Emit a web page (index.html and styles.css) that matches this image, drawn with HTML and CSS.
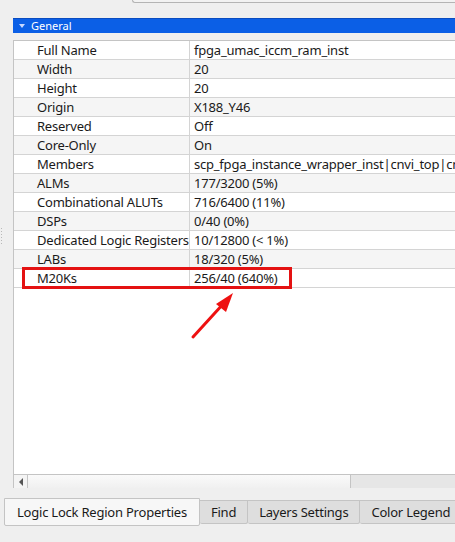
FILE: index.html
```html
<!DOCTYPE html>
<html>
<head>
<meta charset="utf-8">
<link rel="stylesheet" href="styles.css">
</head>
<body>
<div class="page">
  <div class="topstrip"><div class="topwidget"></div></div>
  <div class="grip"><i></i><i></i><i></i><i></i><i></i><i></i></div>
  <div class="panel">
    <div class="section-head"><span class="tri"></span><span class="section-title">General</span></div>
    <div class="frame">
      <div class="rows">
        <div class="row"><div class="k">Full Name</div><div class="v">fpga_umac_iccm_ram_inst</div></div>
        <div class="row alt"><div class="k">Width</div><div class="v">20</div></div>
        <div class="row"><div class="k">Height</div><div class="v">20</div></div>
        <div class="row alt"><div class="k">Origin</div><div class="v">X188_Y46</div></div>
        <div class="row"><div class="k">Reserved</div><div class="v">Off</div></div>
        <div class="row alt"><div class="k">Core-Only</div><div class="v">On</div></div>
        <div class="row"><div class="k">Members</div><div class="v">scp_fpga_instance_wrapper_inst|cnvi_top|cnvi_core</div></div>
        <div class="row alt"><div class="k">ALMs</div><div class="v">177/3200 (5%)</div></div>
        <div class="row"><div class="k">Combinational ALUTs</div><div class="v">716/6400 (11%)</div></div>
        <div class="row alt"><div class="k">DSPs</div><div class="v">0/40 (0%)</div></div>
        <div class="row"><div class="k">Dedicated Logic Registers</div><div class="v">10/12800 (&lt; 1%)</div></div>
        <div class="row alt"><div class="k">LABs</div><div class="v">18/320 (5%)</div></div>
        <div class="row"><div class="k">M20Ks</div><div class="v">256/40 (640%)</div></div>
      </div>
      <div class="hscroll">
        <div class="sbtn"><span class="ltri"></span></div>
        <div class="shandle"></div>
        <div class="strack"></div>
      </div>
      <div class="highlight"></div>
      <svg class="arrow" width="60" height="60" viewBox="0 0 60 60">
        <line x1="3" y1="47" x2="34" y2="13" stroke="#ee1111" stroke-width="3" stroke-linecap="round"/>
        <polygon points="43,3 26,14 36,22" fill="#ee1111"/>
      </svg>
    </div>
  </div>
  <div class="tabs">
    <div class="tab active">Logic Lock Region Properties</div>
    <div class="tab">Find</div>
    <div class="tab">Layers Settings</div>
    <div class="tab">Color Legend</div>
  </div>
</div>
</body>
</html>
```

FILE: styles.css
```css
html, body {
  margin: 0;
  padding: 0;
}
body {
  background: #efefef;
  font-family: "Noto Sans", "Open Sans", sans-serif;
  font-size: 13px;
  letter-spacing: -0.22px;
  color: #1a1a1a;
}
.page {
  width: 455px;
  height: 542px;
  overflow: hidden;
  position: relative;
  background: #efefef;
}
.topstrip {
  height: 18px;
}
.topwidget {
  margin-left: 132px;
  height: 2px;
  border-left: 1px solid #b4b4b4;
  border-bottom: 1px solid #b4b4b4;
  border-bottom-left-radius: 3px;
  background: #f2f2f2;
}
.grip {
  position: absolute;
  left: 1px;
  top: 228px;
  display: flex;
  flex-direction: column;
  gap: 2px;
}
.grip i {
  display: block;
  width: 1px;
  height: 1px;
  background: #b8b8b8;
}
.panel {
  margin-left: 13px;
}
.section-head {
  height: 14px;
  background: #0b5fe6;
  border-top: 1px solid #0a4cc0;
  display: flex;
  align-items: center;
  color: #fff;
}
.tri {
  width: 0;
  height: 0;
  margin-left: 6px;
  border-left: 3px solid transparent;
  border-right: 3px solid transparent;
  border-top: 4px solid #c8d8ff;
}
.section-title {
  margin-left: 6px;
  font-size: 11px;
  letter-spacing: 0;
  line-height: 14px;
}
.frame {
  margin-top: 7px;
  position: relative;
  height: 447px;
  background: #fff;
  border-top: 1px solid #c4c4c4;
  border-left: 1px solid #c4c4c4;
  display: flex;
  flex-direction: column;
}
.rows {
  flex: 1;
}
.row {
  display: grid;
  grid-template-columns: 176px 1fr;
  height: 18px;
  border-bottom: 1px solid #d4d4d4;
  line-height: 18px;
  white-space: nowrap;
  overflow: hidden;
}
.row.alt {
  background: #f5f5f5;
}
.k {
  padding-left: 23px;
  border-right: 1px solid #d4d4d4;
  overflow: hidden;
}
.v {
  padding-left: 4px;
  overflow: hidden;
}
.hscroll {
  height: 13px;
  border-top: 1px solid #c4c4c4;
  display: flex;
  background: #e6e6e6;
}
.sbtn {
  width: 13px;
  border-right: 1px solid #c4c4c4;
  background: #f4f4f4;
  display: flex;
  align-items: center;
  justify-content: center;
}
.ltri {
  width: 0;
  height: 0;
  border-top: 4px solid transparent;
  border-bottom: 4px solid transparent;
  border-right: 4px solid #555;
}
.shandle {
  width: 322px;
  background: linear-gradient(#fafafa, #f0f0f0);
  border-right: 1px solid #c4c4c4;
}
.strack {
  flex: 1;
}
.highlight {
  position: absolute;
  left: 8px;
  top: 226px;
  width: 264px;
  height: 16px;
  border: 3px solid #e41212;
}
.arrow {
  position: absolute;
  left: 176px;
  top: 249px;
}
.tabs {
  margin-top: 10px;
  margin-left: 4px;
  display: flex;
  align-items: flex-start;
}
.tab {
  height: 22px;
  line-height: 22px;
  margin-top: 2px;
  padding: 0 11px;
  background: #dedede;
  border: 1px solid #c4c4c4;
  border-left: none;
  border-radius: 0 0 2px 2px;
  white-space: nowrap;
}
.tab.active {
  margin-top: 0;
  height: 26px;
  line-height: 26px;
  background: #f7f7f7;
  border-left: 1px solid #c4c4c4;
  padding: 0 12px 0 12px;
}
```
